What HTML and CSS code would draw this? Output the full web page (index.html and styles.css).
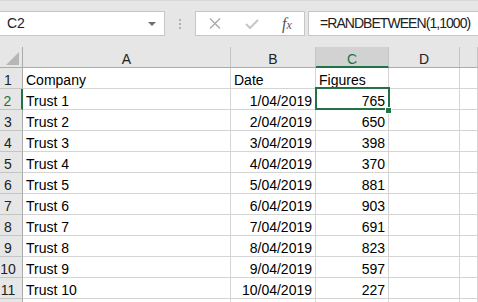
FILE: index.html
```html
<!DOCTYPE html>
<html lang="en">
<head>
    <meta charset="UTF-8">
    <title>Trust Figures</title>
    <link rel="stylesheet" href="styles.css">
</head>
<body>
    <div class="toolbar">
        <div class="name-box">
            <span>C2</span>
            <span class="drop-arrow"></span>
        </div>
        <div class="grip"><i></i><i></i><i></i></div>
        <div class="fx-buttons">
            <svg class="fx-icon" width="12" height="11" viewBox="0 0 12 11">
                <path d="M1 0.5 L11 10.5 M11 0.5 L1 10.5" stroke="#a8a8a8" stroke-width="1.3" fill="none"/>
            </svg>
            <svg class="fx-icon" width="14" height="10" viewBox="0 0 14 10">
                <path d="M1 5 L5 9 L13 1" stroke="#c6c6c6" stroke-width="2" fill="none"/>
            </svg>
            <span class="fx-label">f<small>x</small></span>
        </div>
        <div class="formula">=RANDBETWEEN(1,1000)</div>
    </div>

    <div class="sheet">
        <div class="hd corner"><span class="tri"></span></div>
        <div class="hd col">A</div>
        <div class="hd col">B</div>
        <div class="hd col active">C</div>
        <div class="hd col">D</div>
        <div class="hd col"></div>

        <div class="hd row">1</div>
        <div class="cell">Company</div>
        <div class="cell">Date</div>
        <div class="cell">Figures</div>
        <div class="cell"></div>
        <div class="cell"></div>

        <div class="hd row active">2</div>
        <div class="cell">Trust 1</div>
        <div class="cell num">1/04/2019</div>
        <div class="cell num selected">765<span class="handle"></span></div>
        <div class="cell"></div>
        <div class="cell"></div>

        <div class="hd row">3</div>
        <div class="cell">Trust 2</div>
        <div class="cell num">2/04/2019</div>
        <div class="cell num">650</div>
        <div class="cell"></div>
        <div class="cell"></div>

        <div class="hd row">4</div>
        <div class="cell">Trust 3</div>
        <div class="cell num">3/04/2019</div>
        <div class="cell num">398</div>
        <div class="cell"></div>
        <div class="cell"></div>

        <div class="hd row">5</div>
        <div class="cell">Trust 4</div>
        <div class="cell num">4/04/2019</div>
        <div class="cell num">370</div>
        <div class="cell"></div>
        <div class="cell"></div>

        <div class="hd row">6</div>
        <div class="cell">Trust 5</div>
        <div class="cell num">5/04/2019</div>
        <div class="cell num">881</div>
        <div class="cell"></div>
        <div class="cell"></div>

        <div class="hd row">7</div>
        <div class="cell">Trust 6</div>
        <div class="cell num">6/04/2019</div>
        <div class="cell num">903</div>
        <div class="cell"></div>
        <div class="cell"></div>

        <div class="hd row">8</div>
        <div class="cell">Trust 7</div>
        <div class="cell num">7/04/2019</div>
        <div class="cell num">691</div>
        <div class="cell"></div>
        <div class="cell"></div>

        <div class="hd row">9</div>
        <div class="cell">Trust 8</div>
        <div class="cell num">8/04/2019</div>
        <div class="cell num">823</div>
        <div class="cell"></div>
        <div class="cell"></div>

        <div class="hd row">10</div>
        <div class="cell">Trust 9</div>
        <div class="cell num">9/04/2019</div>
        <div class="cell num">597</div>
        <div class="cell"></div>
        <div class="cell"></div>

        <div class="hd row">11</div>
        <div class="cell">Trust 10</div>
        <div class="cell num">10/04/2019</div>
        <div class="cell num">227</div>
        <div class="cell"></div>
        <div class="cell"></div>

        <!-- row 12, only its top edge is in view -->
        <div class="hd row"></div>
        <div class="cell"></div>
        <div class="cell"></div>
        <div class="cell"></div>
        <div class="cell"></div>
        <div class="cell"></div>
    </div>
</body>
</html>
```

FILE: styles.css
```css
body {
    margin: 0;
    width: 478px;
    height: 302px;
    overflow: hidden;
    background: #fff;
    font-family: 'Liberation Sans', Arial, sans-serif;
    font-size: 14px;
    color: #000;
}

/* formula bar */
.toolbar {
    box-sizing: border-box;
    height: 47px;
    padding-top: 11px;
    display: flex;
    align-items: flex-start;
    background: #e6e6e6;
    border-top: 1px solid #d8d8d8;
}

.name-box {
    box-sizing: border-box;
    width: 166px;
    height: 25px;
    margin-top: -1px;
    margin-left: -1px;
    padding: 0 8px 0 7px;
    display: flex;
    justify-content: space-between;
    align-items: center;
    background: #fff;
    border: 1px solid #c6c6c6;
    color: #222;
    line-height: 23px;
}

.drop-arrow {
    width: 0;
    height: 0;
    border-left: 4px solid transparent;
    border-right: 4px solid transparent;
    border-top: 4px solid #6e6e6e;
}

.grip {
    width: 30px;
    height: 25px;
    display: flex;
    flex-direction: column;
    align-items: center;
    gap: 2px;
    padding-top: 7px;
    box-sizing: border-box;
}

.grip i {
    width: 2px;
    height: 2px;
    background: #b2b2b2;
}

.fx-buttons {
    box-sizing: border-box;
    width: 110px;
    height: 25px;
    margin-top: -1px;
    display: flex;
    align-items: center;
    padding-left: 13px;
    gap: 24px;
    background: #fff;
    border: 1px solid #c6c6c6;
}

.fx-label {
    font-family: 'Liberation Serif', serif;
    font-style: italic;
    font-size: 16px;
    color: #555;
    margin-left: -1px;
}

.fx-label small {
    font-size: 12px;
}

.formula {
    box-sizing: border-box;
    flex: 1;
    height: 25px;
    margin-top: -1px;
    margin-left: 3px;
    margin-right: -1px;
    padding-left: 11px;
    background: #fff;
    border: 1px solid #c6c6c6;
    line-height: 23px;
    letter-spacing: -0.95px;
    color: #222;
}

/* worksheet */
.sheet {
    display: grid;
    grid-template-columns: 23px 208px 85px 73px 71px 1fr;
    grid-auto-rows: 21px;
}

.sheet > div {
    box-sizing: border-box;
    border-right: 1px solid #d4d4d4;
    border-bottom: 1px solid #d4d4d4;
    line-height: 24px;
    white-space: nowrap;
    overflow: hidden;
}

.cell {
    padding: 0 3px;
}

.cell.num {
    text-align: right;
    padding-right: 3px;
}

.sheet > .hd {
    background: #e6e6e6;
    border-color: #c4c4c4;
    color: #222;
    text-align: center;
}

.sheet > .hd.col {
    border-bottom-color: #ababab;
}

.sheet > .hd.row {
    border-right-color: #ababab;
    padding-right: 6px;
}

.sheet > .corner {
    position: relative;
    border-bottom-color: #ababab;
    border-right-color: #ababab;
}

.tri {
    position: absolute;
    right: 3px;
    bottom: 2px;
    width: 0;
    height: 0;
    border-left: 13px solid transparent;
    border-bottom: 13px solid #b6b6b6;
}

.sheet > .hd.col.active {
    background: #d2d2d2;
    color: #217346;
    border-bottom: 2px solid #217346;
}

.sheet > .hd.row.active {
    color: #217346;
    border-right: 2px solid #217346;
}

.sheet > .cell.selected {
    position: relative;
    overflow: visible;
}

.cell.selected::after {
    content: "";
    position: absolute;
    left: -1px;
    top: -2px;
    right: -2px;
    bottom: -1px;
    border: 2px solid #217346;
}

.handle {
    position: absolute;
    left: 69px;
    top: 18px;
    width: 5px;
    height: 5px;
    background: #217346;
    border: 1px solid #fff;
    z-index: 1;
}
```
